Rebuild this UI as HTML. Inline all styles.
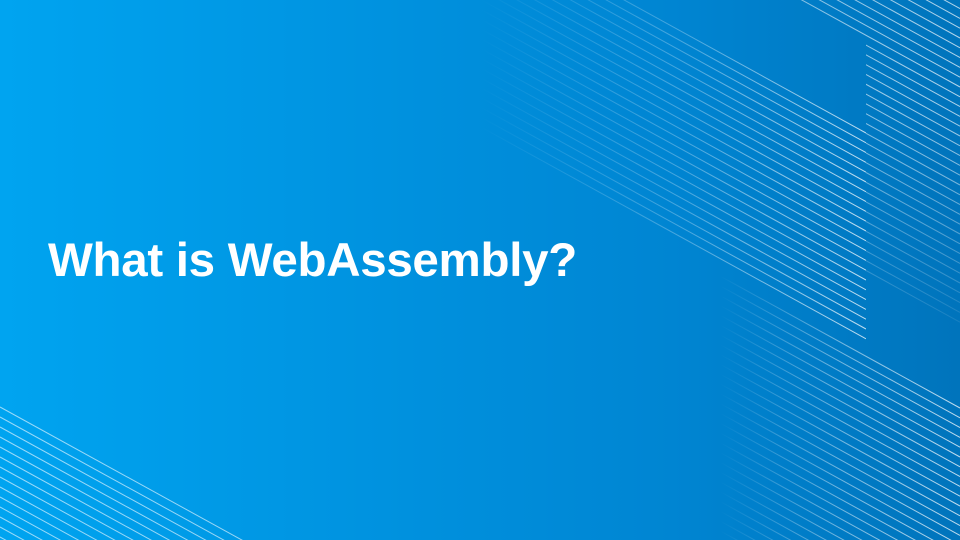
<!DOCTYPE html>
<html><head><style>
html,body{margin:0;padding:0;overflow:hidden}
body{width:960px;height:540px;overflow:hidden;position:relative;background:linear-gradient(90deg,#00a4f0 0%,#0092df 40%,#0085d2 70%,#0074bc 100%)}
h1{position:absolute;left:48px;top:237px;margin:0;font:bold 47.5px/1 "Liberation Sans",sans-serif;color:#fff;letter-spacing:-0.3px;white-space:nowrap}
svg{position:absolute;left:0;top:0;display:block}
</style></head><body>
<svg width="960" height="540" viewBox="0 0 960 540">
<defs>
<linearGradient id="fa" x1="480" y1="0" x2="866" y2="0" gradientUnits="userSpaceOnUse">
<stop offset="0" stop-color="#fff" stop-opacity="0"/><stop offset="0.55" stop-color="#fff" stop-opacity="0.3"/><stop offset="1" stop-color="#fff" stop-opacity="0.75"/></linearGradient>
<linearGradient id="fb" x1="780" y1="0" x2="960" y2="0" gradientUnits="userSpaceOnUse">
<stop offset="0" stop-color="#fff" stop-opacity="0.5"/><stop offset="1" stop-color="#fff" stop-opacity="0.7"/></linearGradient>
<linearGradient id="fb2" x1="0" y1="100" x2="0" y2="330" gradientUnits="userSpaceOnUse">
<stop offset="0" stop-color="#fff" stop-opacity="1"/><stop offset="1" stop-color="#fff" stop-opacity="0.1"/></linearGradient>
<mask id="mb"><rect x="0" y="0" width="960" height="540" fill="url(#fb2)"/></mask>
<linearGradient id="fc" x1="720" y1="0" x2="960" y2="0" gradientUnits="userSpaceOnUse">
<stop offset="0" stop-color="#fff" stop-opacity="0"/><stop offset="0.5" stop-color="#fff" stop-opacity="0.45"/><stop offset="1" stop-color="#fff" stop-opacity="0.75"/></linearGradient>
<clipPath id="ca"><rect x="480" y="0" width="386" height="540"/></clipPath>
<clipPath id="cb"><polygon points="790,0 960,0 960,540 866,540 866,42"/></clipPath>
<clipPath id="cc"><rect x="700" y="0" width="260" height="540"/></clipPath>
<clipPath id="cd"><rect x="0" y="0" width="960" height="540"/></clipPath>
</defs>
<g clip-path="url(#ca)" stroke="url(#fa)" stroke-width="1" fill="none" id="ga"></g>
<g clip-path="url(#cb)" mask="url(#mb)"><g stroke="url(#fb)" stroke-width="1" fill="none" id="gb"></g></g>
<g clip-path="url(#cc)" stroke="url(#fc)" stroke-width="1" fill="none" id="gc"></g>
<g clip-path="url(#cd)" stroke="#fff" stroke-opacity="0.6" stroke-width="1" fill="none" id="gd"></g>
</svg>
<h1>What is WebAssembly?</h1>
<script>
var s=0.55,NS="http://www.w3.org/2000/svg";
function add(id,x0,yStart,yEnd,step,xa,xb){var g=document.getElementById(id);for(var y=yStart;y<=yEnd;y+=step){var l=document.createElementNS(NS,"line");l.setAttribute("x1",xa);l.setAttribute("y1",y+s*(xa-x0));l.setAttribute("x2",xb);l.setAttribute("y2",y+s*(xb-x0));g.appendChild(l);}}
add("ga",866,133,340,9.8,300,866);
add("gb",960,-60,325,9.8,700,960);
add("gc",960,408,700,9.8,600,960);
add("gd",0,407,560,10,0,300);
</script>
</body></html>
